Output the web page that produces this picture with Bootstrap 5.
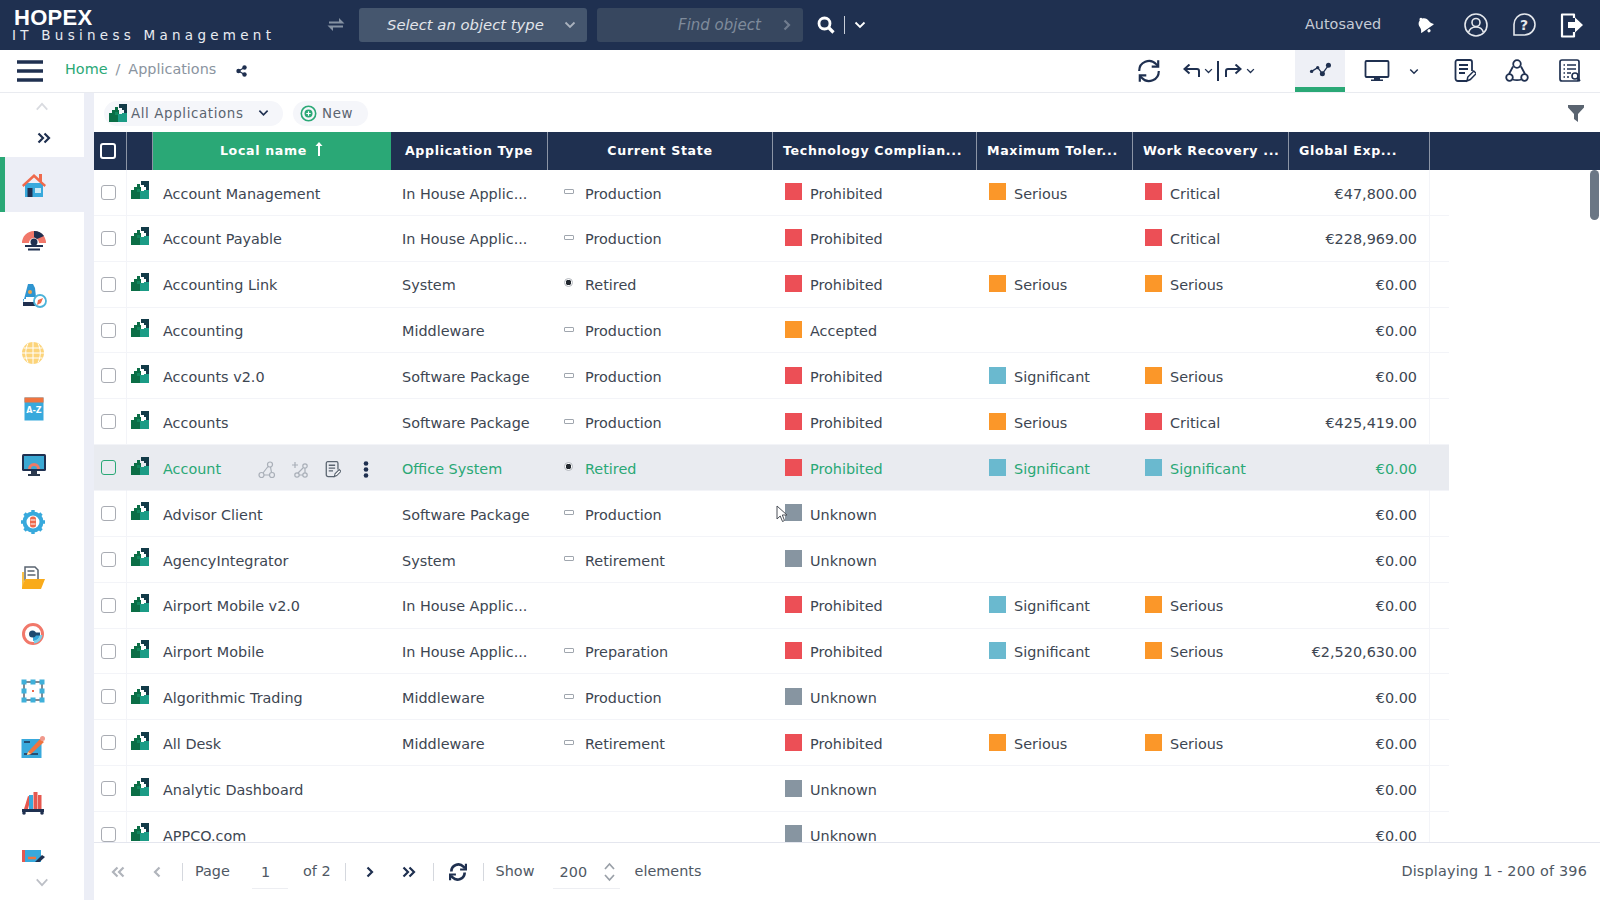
<!DOCTYPE html>
<html lang="en">
<head>
<meta charset="utf-8">
<title>HOPEX IT Business Management</title>
<link href="https://cdn.jsdelivr.net/npm/bootstrap@5.3.0/dist/css/bootstrap.min.css" rel="stylesheet">
<style>
html,body{height:100%;overflow:hidden}
body{font-family:"DejaVu Sans",Verdana,sans-serif;font-size:14px;color:#3d4652;background:#fff;width:1600px;height:900px}
.hx-sprite{width:0;height:0;position:absolute}
.hx-top{height:50px;background:#1f3050;color:#fff;padding:0}
.hx-brand{width:300px;padding:8px 0 0 12px;height:50px;flex:none}
.hx-logo{font:700 22px/20px "Liberation Sans",sans-serif;letter-spacing:.3px;padding-left:2px;color:#fff}
.hx-sub{font-family:"DejaVu Sans",sans-serif;font-size:13.5px;line-height:15px;letter-spacing:4.27px;color:#e8ebf0;margin-top:0;white-space:nowrap}
.hx-swap{width:24px;height:24px;margin-left:24px;color:#8592a3;flex:none}
.hx-select{width:228px;height:34px;background:#45566e;border-radius:3px;margin-left:11px;padding:0 11px 0 28px;font-style:italic;font-size:14.8px;color:#e2e5ea;flex:none}
.hx-find{width:206px;height:34px;background:#37475f;border-radius:3px;margin-left:10px;padding:0 12px 0 81px;font-style:italic;font-size:15px;color:#7f8b9b;flex:none}
.hx-ic{flex:none;display:block}
.hx-sep{width:1px;height:18px;background:#c8ced8;flex:none}
.hx-auto{font-size:14.4px;color:#c6ccd6;width:111px;flex:none}
.hx-crumbbar{height:43px;border-bottom:1px solid #e9ebf0;padding:0}
.hx-burger{width:26px;height:22px;margin-left:17px;flex:none;color:#1f3050}
.hx-crumbs{margin:0 0 2px 22px;font-size:14.4px;--bs-breadcrumb-divider-color:#8a94a0;--bs-breadcrumb-item-padding-x:8px}
.hx-crumbs a{color:#2aa876;text-decoration:none}
.hx-crumbs .breadcrumb-item.active{color:#8a94a0}
.hx-tabon{width:50px;height:43px;background:#eef0f6;border-bottom:0;position:relative;flex:none}
.hx-tabon::after{content:"";position:absolute;left:0;right:0;bottom:1px;height:5px;background:#2aa876}
.hx-main{height:807px}
.hx-side{width:84px;flex:none;background:#fff;overflow:hidden;position:relative}
.hx-strip{width:10px;flex:none;background:#eceef6}
.hx-sidetop{height:64px}
.hx-upchev{height:26px;padding-top:9px}
.hx-dbl{color:#1f3050;font-size:0}
.hx-sitem{height:56.3px;padding-left:21px;flex:none}
.hx-sitem.hx-on{background:#eceef6;border-left:5px solid #2aa876;padding-left:16px;height:55px}
.hx-sideclip{height:705px;overflow:hidden}
.hx-downchev{position:absolute;left:0;right:0;bottom:6px;height:30px;background:#fff;padding-top:14px}
.hx-body{min-width:0}
.hx-tools{height:39px;padding:1px 16px 0 10px}
.hx-pill{height:25px;padding:0 5px;border-radius:13px;background:#f5f6fa;border:0;color:#5a6470;font-size:13.4px;letter-spacing:.62px;line-height:25px;--bs-btn-hover-bg:#f5f6fa;--bs-btn-hover-color:#5a6470}
.hx-pill1{width:179px}
.hx-pill2{width:75px;margin-left:10px;padding-left:7px}
.hx-headband{background:#1f3050;height:38px;overflow:hidden}
.table.hx-tbl{table-layout:fixed;width:1355px;margin:0;border-collapse:separate;border-spacing:0;--bs-table-bg:transparent;color:#3d4652}
.hx-c0{width:33px}.hx-c1{width:26px}.hx-c2{width:238px}.hx-c3{width:157px}.hx-c4{width:225px}.hx-c5{width:204px}.hx-c6{width:156px}.hx-c7{width:156px}.hx-c8{width:141px}.hx-c9{width:19px}
.table.hx-tbl>:not(caption)>*>th{background:#1f3050;color:#fff;height:38px;padding:0 10px;font-size:12.6px;font-weight:700;letter-spacing:.66px;text-align:center;white-space:nowrap;overflow:hidden;border:0;border-right:1px solid #8b94a5;vertical-align:middle;line-height:1}
.table.hx-tbl>:not(caption)>*>th.hx-sorted{background:#2aa876;border-right-color:#2aa876}
.table.hx-tbl>:not(caption)>*>th.hx-left{text-align:left}
.table.hx-tbl>:not(caption)>*>th.hx-end{border-right:0;padding:0}
.hx-check{width:15px;height:15px;margin:0 0 0 7px;border:1px solid #a9acb3;border-radius:3px;display:block;background:#fff}
.hx-checkh{width:16px;height:16px;border:2px solid #fff;background:transparent;border-radius:3px;margin:0 0 0 6px;display:block}
.hx-scroll{height:672px;overflow:hidden;position:relative}
.table.hx-tbl>:not(caption)>*>td{height:45.86px;padding:4px 11px 0;font-size:14.4px;vertical-align:middle;border:0;border-bottom:1px solid #f3f4f8;white-space:nowrap;overflow:hidden;background:#fff;box-shadow:none;color:#3d4652}
.table.hx-tbl>:not(caption)>*>td.hx-t0{padding:0;border-right:1px solid #f3f4f8}
.table.hx-tbl>:not(caption)>*>td.hx-t1{padding:0 0 0 4px}
.hx-t1 svg{display:block;margin-top:-4px}
.table.hx-tbl>:not(caption)>*>td.hx-t2{padding-left:10px}
.table.hx-tbl>:not(caption)>*>td.hx-num{text-align:right;padding-right:12px;border-right:1px solid #f3f4f8}
.table.hx-tbl>:not(caption)>*>td.hx-sw{padding-left:12px}
.table.hx-tbl>:not(caption)>*>td.hx-st{padding-left:13px}
.table.hx-tbl>:not(caption)>tr.hx-hov>td,.table.hx-tbl>tbody>tr.hx-hov>td{background:#e9ebf0;color:#2aa876;border-right-color:#e9ebf0}
.hx-hov .hx-check{border-color:#2aa876;background:transparent}
.hx-swatch{width:17px;height:17px;flex:none;margin-right:8px;margin-top:-5px}
.hx-r{background:#ec4f56}.hx-o{background:#fb9729}.hx-b{background:#6ab9cf}.hx-g{background:#8795a1}
.hx-mark{width:24px;flex:none;margin-top:-5px;padding-left:3px}
.hx-bar{width:10px;height:5px;border:1px solid #a0a6ae;border-radius:1px;display:block}
.hx-rad{width:9px;height:9px;border:1px solid #b2b6bc;border-radius:50%;display:block;background:radial-gradient(circle,#22282f 0 2.6px,#fff 3px);margin-top:-2px}
.hx-acts{gap:0;margin-left:auto;margin-right:-2px}
.hx-rowname{width:100%}
.hx-pad{width:33px;flex:none;text-align:center}
.hx-foot{height:58px;border-top:1px solid #e4e6ee;padding:0 13px 0 0;color:#4f5864;font-size:14.4px;background:#fff}
.hx-f{flex:none}
.hx-fsep{width:1px;height:18px;background:#d5d8de;flex:none}
.hx-inp{width:36px;height:34px;border-bottom:1px solid #edeef2;flex:none;line-height:34px;padding-left:9px}
.hx-inp2{width:67px;margin-left:13px;padding-left:7px}
.hx-disp{letter-spacing:.17px}
.hx-cursor{position:absolute;left:776px;top:505px;width:12px;height:18px;z-index:5}
.hx-scrollbar{position:absolute;left:1590px;top:170px;width:9px;height:50px;background:#6b7785;border-radius:5px;z-index:4}
</style>
</head>
<body>
<svg class="hx-sprite" aria-hidden="true">
<defs>
<symbol id="puz" viewBox="0 0 18 18"><path d="M0 9h3V6h3V3h3v3h1v12H0z" fill="#0b6e46"/><path d="M9 10h4v-1h5v9H9z" fill="#1c9c86"/><path d="M10 0h8v9h-3V6h-2V4h-3z" fill="#123b48"/><path d="M6 8h3v3H6z" fill="#12885e"/></symbol>
<symbol id="chev" viewBox="0 0 12 8"><path d="M1.5 1.5 6 6l4.5-4.5" fill="none" stroke="currentColor" stroke-width="1.8"/></symbol>
<symbol id="chevup" viewBox="0 0 16 10"><path d="M2 8.5 8 2l6 6.5" fill="none" stroke="currentColor" stroke-width="2"/></symbol>
<symbol id="chevdn" viewBox="0 0 16 10"><path d="M2 1.5 8 8l6-6.5" fill="none" stroke="currentColor" stroke-width="2"/></symbol>
<symbol id="dblr" viewBox="0 0 14 12"><path d="M1.5 1.5 6 6l-4.500 4.500M7.500 1.500 12 6l-4.500 4.500" fill="none" stroke="currentColor" stroke-width="2.200"/></symbol>
<symbol id="dbll" viewBox="0 0 14 12"><path d="M6.500 1.500 2 6l4.500 4.500M12.500 1.500 8 6l4.500 4.500" fill="none" stroke="currentColor" stroke-width="2.200"/></symbol>
<symbol id="sgl" viewBox="0 0 8 12"><path d="M1.500 1.500 6 6l-4.500 4.500" fill="none" stroke="currentColor" stroke-width="2.200"/></symbol>
<symbol id="sgll" viewBox="0 0 8 12"><path d="M6.500 1.500 2 6l4.500 4.500" fill="none" stroke="currentColor" stroke-width="2.200"/></symbol>
<symbol id="sync" viewBox="0 0 24 24"><path d="M3 12A9 9 0 0 1 18.500 5.500l2 2M21 12A9 9 0 0 1 5.500 18.500l-2-2" fill="none" stroke="currentColor" stroke-width="2"/><path d="M20.500 2v6h-6M3.500 22v-6h6" fill="none" stroke="currentColor" stroke-width="2"/></symbol>
<symbol id="noteq" viewBox="0 0 22 24"><rect x="1" y="1" width="19" height="21" rx="2" fill="none" stroke="currentColor" stroke-width="1.700"/><path d="M4.500 6h1.500M8 6h9M4.500 10h1.500M8 10h9M4.500 14h1.500M8 14h4M4.500 18h1.500M8 18h2" stroke="currentColor" stroke-width="1.600" fill="none"/><circle cx="16" cy="17" r="3" fill="#fff" stroke="currentColor" stroke-width="1.600"/><path d="m18 19 3 3" stroke="currentColor" stroke-width="2"/></symbol>
<symbol id="notep" viewBox="0 0 22 24"><path d="M13 22H4a2.500 2.500 0 0 1-2.500-2.500V3A2 2 0 0 1 3.500 1H16a2 2 0 0 1 2 2v9" fill="none" stroke="currentColor" stroke-width="1.800"/><path d="M5 6h9M5 10h9M5 14h6" stroke="currentColor" stroke-width="1.800" fill="none"/><path d="m13 22 .8-4 6-6 2.500 2.500-6 6z" fill="#fff" stroke="currentColor" stroke-width="1.500"/></symbol>
<symbol id="tri" viewBox="0 0 24 24"><path d="M8 7.500 4 15M16 7.500l4 7.500M7.500 20.500c3 .8 6 .8 9 0" fill="none" stroke="currentColor" stroke-width="1.800"/><circle cx="12" cy="5" r="3.800" fill="#fff" stroke="currentColor" stroke-width="1.800"/><circle cx="4.500" cy="18.500" r="3.300" fill="#fff" stroke="currentColor" stroke-width="1.800"/><circle cx="19.500" cy="18.500" r="3.300" fill="#fff" stroke="currentColor" stroke-width="1.800"/></symbol>
<symbol id="spark" viewBox="0 0 24 16"><circle cx="2.500" cy="10" r="1.800" fill="currentColor"/><circle cx="9" cy="6" r="1.800" fill="currentColor"/><circle cx="14" cy="12.500" r="2.700" fill="currentColor"/><circle cx="20.500" cy="3.500" r="2.700" fill="currentColor"/><path d="M2.500 10 9 6l5 6.500 6.500-9" stroke="currentColor" stroke-width="1.300" fill="none"/></symbol>
</defs>
</svg>

<nav class="navbar hx-top d-flex flex-nowrap align-items-center justify-content-start">
  <div class="hx-brand">
    <div class="hx-logo">HOPEX</div>
    <div class="hx-sub">IT Business Management</div>
  </div>
  <svg class="hx-swap" viewBox="0 0 24 24"><path d="M5 8.500h10V5l5.500 5.500H5zM19 14.500H9V18l-5.500-5.500H19z" fill="currentColor"/></svg>
  <div class="hx-select d-flex align-items-center justify-content-between"><span>Select an object type</span><svg class="hx-ic" width="12" height="8" style="color:#aab2be"><use href="#chev"/></svg></div>
  <div class="hx-find d-flex align-items-center justify-content-between"><span>Find object</span><svg class="hx-ic" width="8" height="12" style="color:#6f7c8e"><use href="#sgl"/></svg></div>
  <svg class="hx-ic ms-3" width="18" height="18" viewBox="0 0 18 18" style="margin-left:14px!important"><circle cx="7.500" cy="7.500" r="5.500" fill="none" stroke="#fff" stroke-width="2.800"/><path d="m11.500 11.500 5 5" stroke="#fff" stroke-width="3.200"/></svg>
  <span class="hx-sep" style="margin-left:9px"></span>
  <svg class="hx-ic" width="12" height="8" style="margin-left:9px;color:#fff"><use href="#chev"/></svg>
  <div class="hx-auto ms-auto">Autosaved</div>
  <svg class="hx-ic" width="18" height="18" viewBox="0 0 18 18"><g transform="rotate(-35 9 9)"><path d="M9 .5a1.500 1.500 0 0 1 1.500 1.500c3 1 4 3.500 4 6 0 2.500 1 3.800 2 4.800v.7h-15v-.7c1-1 2-2.300 2-4.800 0-2.500 1-5 4-6A1.500 1.500 0 0 1 9 .5z" fill="#fff"/><circle cx="9" cy="16" r="1.600" fill="#fff"/></g></svg>
  <svg class="hx-ic" width="24" height="24" viewBox="0 0 24 24" style="margin-left:30px"><circle cx="12" cy="12" r="11" fill="none" stroke="#e4e7ec" stroke-width="1.600"/><circle cx="12" cy="9.500" r="4" fill="none" stroke="#e4e7ec" stroke-width="1.600"/><path d="M4.500 19.500c1-3.500 4-5.500 7.500-5.500s6.500 2 7.500 5.500" fill="none" stroke="#e4e7ec" stroke-width="1.600"/></svg>
  <svg class="hx-ic" width="24" height="24" viewBox="0 0 24 24" style="margin-left:24px"><path d="M12.500 1a10.500 10.500 0 0 1 0 21H2v-10A10.500 10.500 0 0 1 12.500 1z" fill="none" stroke="#e4e7ec" stroke-width="1.600"/><text x="12" y="17" font-size="14" font-weight="700" fill="#e4e7ec" text-anchor="middle" font-family="DejaVu Sans">?</text></svg>
  <svg class="hx-ic" width="25" height="25" viewBox="0 0 25 25" style="margin-left:24px"><path d="M14 5V1.500H2v22h12V19" fill="none" stroke="#fff" stroke-width="2.200" stroke-linejoin="round"/><path d="M8 9h7V4.500l8 7.500-8 7.500V15H8z" fill="#fff"/></svg>
  <span style="width:15px;flex:none"></span>
</nav>

<div class="hx-crumbbar d-flex align-items-center">
  <svg class="hx-burger" viewBox="0 0 26 22"><path d="M0 2h26M0 11h26M0 20h26" stroke="currentColor" stroke-width="3.600"/></svg>
  <nav aria-label="breadcrumb"><ol class="breadcrumb hx-crumbs"><li class="breadcrumb-item"><a href="#">Home</a></li><li class="breadcrumb-item active">Applications</li></ol></nav>
  <svg class="hx-ic" width="11" height="12" viewBox="0 0 11 12" style="margin-left:20px;color:#1f3050"><circle cx="2.500" cy="6" r="2.200" fill="currentColor"/><circle cx="8.500" cy="2.500" r="2.200" fill="currentColor"/><circle cx="8.500" cy="9.500" r="2.200" fill="currentColor"/><path d="M2.500 6 8.500 2.500M2.500 6l6 3.500" stroke="currentColor" stroke-width="1.300"/></svg>
  <svg class="hx-ic ms-auto" width="26" height="26" style="color:#1f3050"><use href="#sync"/></svg>
  <svg class="hx-ic" width="17" height="14" viewBox="0 0 17 14" style="margin-left:21px;color:#1f3050"><path d="M16 13V7a2 2 0 0 0-2-2H2" fill="none" stroke="currentColor" stroke-width="2"/><path d="M6.500 .5 1.500 5l5 4.500" fill="none" stroke="currentColor" stroke-width="2"/></svg>
  <svg class="hx-ic" width="9" height="6" style="margin-left:4px;color:#1f3050"><use href="#chev"/></svg>
  <span style="width:2px;height:20px;background:#1f3050;margin-left:4px;flex:none"></span>
  <svg class="hx-ic" width="17" height="14" viewBox="0 0 17 14" style="margin-left:6px;color:#1f3050"><path d="M1 13V7a2 2 0 0 1 2-2h12" fill="none" stroke="currentColor" stroke-width="2"/><path d="M10.500 .5 15.500 5l-5 4.500" fill="none" stroke="currentColor" stroke-width="2"/></svg>
  <svg class="hx-ic" width="9" height="6" style="margin-left:4px;color:#1f3050"><use href="#chev"/></svg>
  <div class="hx-tabon d-flex align-items-center justify-content-center" style="margin-left:40px"><svg width="23" height="15" style="color:#1f3050;margin-bottom:4px"><use href="#spark"/></svg></div>
  <svg class="hx-ic" width="26" height="24" viewBox="0 0 26 24" style="margin-left:19px;color:#1f3050"><rect x="1.500" y="2" width="23" height="16" rx="1" fill="none" stroke="currentColor" stroke-width="1.800"/><path d="M10 18h6v2.500h3V22H7v-1.500h3z" fill="currentColor"/></svg>
  <svg class="hx-ic" width="10" height="7" style="margin-left:19px;color:#1f3050"><use href="#chev"/></svg>
  <svg class="hx-ic" width="22" height="24" style="margin-left:35px;color:#1f3050"><use href="#notep"/></svg>
  <svg class="hx-ic" width="24" height="24" style="margin-left:29px;color:#1f3050"><use href="#tri"/></svg>
  <svg class="hx-ic" width="22" height="24" style="margin-left:30px;color:#1f3050"><use href="#noteq"/></svg>
  <span style="width:19px;flex:none"></span>
</div>

<div class="hx-main d-flex">
  <aside class="hx-side d-flex flex-column">
    <div class="hx-sidetop">
      <div class="hx-upchev d-flex justify-content-center"><svg width="14" height="9" style="color:#d9dbe0"><use href="#chevup"/></svg></div>
      <div class="hx-dbl d-flex align-items-center justify-content-center" style="height:38px;padding-left:3px"><svg width="14" height="12"><use href="#dblr"/></svg></div>
    </div>
    <div class="hx-sideclip d-flex flex-column">
      <div class="hx-sitem hx-on d-flex align-items-center"><svg width="26" height="26" viewBox="0 0 26 26"><rect x="4" y="11" width="18" height="14" fill="#38a9dc"/><path d="M1 13 13 2l5 4.500V2h3v7.500l4 3.500-1.500 2L13 5.500 2.500 15z" fill="#ef6a4c"/><rect x="6.500" y="16" width="5" height="9" fill="#1f3050"/><rect x="14" y="16" width="6" height="5" fill="#cbeaf5"/></svg></div>
      <div class="hx-sitem d-flex align-items-center"><svg width="26" height="26" viewBox="0 0 26 26"><path d="M1 16a12 12 0 0 1 24 0h-7a5 5 0 0 0-10 0z" fill="#f1786a"/><path d="M13 4a12 12 0 0 1 10 5l-7 3-3-2z" fill="#1f3050"/><circle cx="13" cy="15" r="3.500" fill="#1f3050"/><path d="M4 19h18M7 22.500h12" stroke="#1f3050" stroke-width="1.800"/></svg></div>
      <div class="hx-sitem d-flex align-items-center"><svg width="26" height="26" viewBox="0 0 26 26"><path d="M7 1h5l2 4 1 9H5v2H2v4h15v2H2v-2" fill="#2f95d0"/><rect x="2" y="19" width="13" height="4" fill="#1f3050"/><circle cx="9" cy="9" r="2" fill="#f1a34a"/><circle cx="19" cy="18" r="6" fill="#fff" stroke="#4db3d9" stroke-width="1.800"/><path d="m22 15-5 2 -1 5 4-2z" fill="#ef6a4c"/></svg></div>
      <div class="hx-sitem d-flex align-items-center"><svg width="24" height="24" viewBox="0 0 24 24"><circle cx="12" cy="12" r="11" fill="#fcd47a"/><path d="M1 12h22M2.500 7h19M2.500 17h19M12 1v22M7 2.500c-3 6-3 13 0 19M17 2.500c3 6 3 13 0 19" stroke="#fff" stroke-width="1" fill="none"/></svg></div>
      <div class="hx-sitem d-flex align-items-center"><svg width="20" height="24" viewBox="0 0 20 24" style="margin-left:3px"><rect x="0.500" y="0.500" width="19" height="23" fill="#38a9dc"/><rect x="0.500" y="0.500" width="19" height="5" fill="#f0743f"/><text x="10" y="16" font-size="8" font-weight="700" fill="#fff" text-anchor="middle" font-family="DejaVu Sans">A-Z</text></svg></div>
      <div class="hx-sitem d-flex align-items-center"><svg width="26" height="24" viewBox="0 0 26 24"><rect x="1" y="1" width="24" height="17" rx="1.500" fill="#1f3050"/><rect x="3" y="3" width="20" height="13" fill="#3ba9d4"/><path d="M7 16a6 6 0 0 1 12 0h-3a3 3 0 0 0-6 0z" fill="#ef7a66"/><path d="M10 18h6v3h3v2H7v-2h3z" fill="#2b3a4f"/></svg></div>
      <div class="hx-sitem d-flex align-items-center"><svg width="24" height="24" viewBox="0 0 24 24"><circle cx="12" cy="12" r="8.500" fill="#fff" stroke="#38a9dc" stroke-width="4"/><path d="M12 0v4M12 20v4M0 12h4M20 12h4M3.500 3.500l3 3M17.500 17.500l3 3M3.500 20.500l3-3M17.500 6.500l3-3" stroke="#38a9dc" stroke-width="3.400"/><rect x="9" y="6.500" width="6" height="11" rx="2.500" fill="#ef6a4c"/><path d="M9.500 10h5M9.500 14h5" stroke="#fff"/></svg></div>
      <div class="hx-sitem d-flex align-items-center"><svg width="24" height="24" viewBox="0 0 24 24"><path d="M1 6h2v16H1z" fill="#f9c147"/><path d="M4 14V1h10l3 3v11z" fill="#fff" stroke="#5a6470" stroke-width="1.500"/><path d="M6.500 5h7M6.500 9h8" stroke="#5a6470" stroke-width="1.500"/><path d="M1 22l3-9h20l-4 10H1z" fill="#f9ab1b"/></svg></div>
      <div class="hx-sitem d-flex align-items-center"><svg width="24" height="24" viewBox="0 0 24 24"><circle cx="12" cy="12" r="9.500" fill="none" stroke="#f1786a" stroke-width="3"/><path d="M13 21.500a9.500 9.500 0 0 0 8.500-8.500H13z" fill="#7ed0ea"/><circle cx="12" cy="12" r="7" fill="#fff"/><path d="M12 19a7 7 0 0 0 7-7h-7z" fill="#38a9dc"/><circle cx="11.500" cy="12" r="3.500" fill="#1f4a70"/><path d="M12 10.500h7v3h-7z" fill="#1f4a70"/></svg></div>
      <div class="hx-sitem d-flex align-items-center"><svg width="24" height="24" viewBox="0 0 24 24"><rect x="3" y="3" width="18" height="18" fill="none" stroke="#5a6470" stroke-width="1.500"/><g fill="#3fb0da"><rect x="0.500" y="0.500" width="5" height="5"/><rect x="18.500" y="0.500" width="5" height="5"/><rect x="0.500" y="18.500" width="5" height="5"/><rect x="18.500" y="18.500" width="5" height="5"/><rect x="0.500" y="9.500" width="5" height="5"/><rect x="18.500" y="9.500" width="5" height="5"/><rect x="9.500" y="0.500" width="5" height="5"/><rect x="9.500" y="18.500" width="5" height="5"/></g><rect x="11" y="11" width="2" height="2" fill="#ef6a4c"/></svg></div>
      <div class="hx-sitem d-flex align-items-center"><svg width="24" height="24" viewBox="0 0 24 24"><rect x="0.500" y="4" width="20" height="19" fill="#38a9dc"/><path d="M3 7h6M3 19h14" stroke="#1f3050" stroke-width="1.300"/><path d="m7 17 12-13 4 3L10 19l-4 1z" fill="#f0743f"/><path d="m7 17 3 2-4 1z" fill="#fde0a8"/><circle cx="21.500" cy="3.500" r="2.500" fill="#f1998c"/></svg></div>
      <div class="hx-sitem d-flex align-items-center"><svg width="24" height="24" viewBox="0 0 24 24"><rect x="1" y="18" width="22" height="3" fill="#1f3050"/><circle cx="3" cy="22" r="1.800" fill="#1f3050"/><circle cx="21" cy="22" r="1.800" fill="#1f3050"/><path d="M3 18 7 5l3 1-3 12z" fill="#e6584f"/><rect x="8" y="4" width="4" height="14" fill="#38a9dc"/><rect x="12.500" y="1" width="4" height="17" fill="#e6584f"/><rect x="17" y="4" width="3.500" height="14" fill="#e6584f"/></svg></div>
      <div class="hx-sitem d-flex align-items-center"><svg width="24" height="24" viewBox="0 0 24 24"><rect x="1" y="3" width="19" height="16" fill="#38a9dc"/><rect x="1" y="3" width="3" height="16" fill="#e6584f"/><path d="M7 11h8" stroke="#f0743f" stroke-width="2.500"/><path d="m10 19 11-11 3 2-12 11z" fill="#1f3050"/></svg></div>
    </div>
    <div class="hx-downchev d-flex justify-content-center"><svg width="14" height="9" style="color:#bcbfc6"><use href="#chevdn"/></svg></div>
  </aside>
  <div class="hx-strip"></div>

  <div class="hx-body flex-grow-1 d-flex flex-column">
    <div class="hx-tools d-flex align-items-center">
      <button type="button" class="btn hx-pill hx-pill1 d-flex align-items-center"><svg width="18" height="18" class="me-1 flex-none"><use href="#puz"/></svg><span class="flex-grow-1 text-start">All Applications</span><svg width="11" height="8" style="color:#1f3050;margin-right:9px"><use href="#chev"/></svg></button>
      <button type="button" class="btn hx-pill hx-pill2 d-flex align-items-center"><svg width="17" height="17" viewBox="0 0 17 17" style="margin-right:5px"><circle cx="8.500" cy="8.500" r="7.200" fill="none" stroke="#2aa876" stroke-width="1.600"/><circle cx="8.500" cy="8.500" r="4" fill="#2aa876"/><path d="M6.300 8.500h4.400M8.500 6.300v4.400" stroke="#fff" stroke-width="1.200"/></svg>New</button>
      <svg class="ms-auto" width="16" height="17" viewBox="0 0 16 17"><path d="M0 0h16v2.500L10 9v8l-4-3V9L0 2.500z" fill="#5a6470"/></svg>
    </div>
    <div class="hx-headband">
      <table class="table hx-tbl">
        <colgroup><col class="hx-c0"><col class="hx-c1"><col class="hx-c2"><col class="hx-c3"><col class="hx-c4"><col class="hx-c5"><col class="hx-c6"><col class="hx-c7"><col class="hx-c8"><col class="hx-c9"></colgroup>
        <thead><tr>
          <th style="padding:0"><span class="hx-checkh" role="checkbox" aria-label="Select all"></span></th>
          <th></th>
          <th class="hx-sorted">Local name <svg width="8" height="15" viewBox="0 0 8 15" style="margin-left:3px;margin-top:-5px"><path d="M4 1 7.500 5H5v10H3V5H.5z" fill="#fff"/></svg></th>
          <th>Application Type</th>
          <th>Current State</th>
          <th class="hx-left">Technology Complian...</th>
          <th class="hx-left">Maximum Toler...</th>
          <th class="hx-left">Work Recovery ...</th>
          <th class="hx-left">Global Exp...</th>
          <th class="hx-end"></th>
        </tr></thead>
      </table>
    </div>
    <div class="hx-scroll">
      <table class="table hx-tbl">
        <colgroup><col class="hx-c0"><col class="hx-c1"><col class="hx-c2"><col class="hx-c3"><col class="hx-c4"><col class="hx-c5"><col class="hx-c6"><col class="hx-c7"><col class="hx-c8"><col class="hx-c9"></colgroup>
        <tbody>
<tr><td class="hx-t0"><span class="hx-check"></span></td><td class="hx-t1"><svg width="18" height="18"><use href="#puz"/></svg></td><td class="hx-t2">Account Management</td><td>In House Applic...</td><td class="hx-st"><div class="d-flex align-items-center"><span class="hx-mark"><i class="hx-bar"></i></span>Production</div></td><td class="hx-sw"><div class="d-flex align-items-center"><span class="hx-swatch hx-r"></span>Prohibited</div></td><td class="hx-sw"><div class="d-flex align-items-center"><span class="hx-swatch hx-o"></span>Serious</div></td><td class="hx-sw"><div class="d-flex align-items-center"><span class="hx-swatch hx-r"></span>Critical</div></td><td class="hx-num">€47,800.00</td><td></td></tr>
<tr><td class="hx-t0"><span class="hx-check"></span></td><td class="hx-t1"><svg width="18" height="18"><use href="#puz"/></svg></td><td class="hx-t2">Account Payable</td><td>In House Applic...</td><td class="hx-st"><div class="d-flex align-items-center"><span class="hx-mark"><i class="hx-bar"></i></span>Production</div></td><td class="hx-sw"><div class="d-flex align-items-center"><span class="hx-swatch hx-r"></span>Prohibited</div></td><td class="hx-sw"></td><td class="hx-sw"><div class="d-flex align-items-center"><span class="hx-swatch hx-r"></span>Critical</div></td><td class="hx-num">€228,969.00</td><td></td></tr>
<tr><td class="hx-t0"><span class="hx-check"></span></td><td class="hx-t1"><svg width="18" height="18"><use href="#puz"/></svg></td><td class="hx-t2">Accounting Link</td><td>System</td><td class="hx-st"><div class="d-flex align-items-center"><span class="hx-mark"><i class="hx-rad"></i></span>Retired</div></td><td class="hx-sw"><div class="d-flex align-items-center"><span class="hx-swatch hx-r"></span>Prohibited</div></td><td class="hx-sw"><div class="d-flex align-items-center"><span class="hx-swatch hx-o"></span>Serious</div></td><td class="hx-sw"><div class="d-flex align-items-center"><span class="hx-swatch hx-o"></span>Serious</div></td><td class="hx-num">€0.00</td><td></td></tr>
<tr><td class="hx-t0"><span class="hx-check"></span></td><td class="hx-t1"><svg width="18" height="18"><use href="#puz"/></svg></td><td class="hx-t2">Accounting</td><td>Middleware</td><td class="hx-st"><div class="d-flex align-items-center"><span class="hx-mark"><i class="hx-bar"></i></span>Production</div></td><td class="hx-sw"><div class="d-flex align-items-center"><span class="hx-swatch hx-o"></span>Accepted</div></td><td class="hx-sw"></td><td class="hx-sw"></td><td class="hx-num">€0.00</td><td></td></tr>
<tr><td class="hx-t0"><span class="hx-check"></span></td><td class="hx-t1"><svg width="18" height="18"><use href="#puz"/></svg></td><td class="hx-t2">Accounts v2.0</td><td>Software Package</td><td class="hx-st"><div class="d-flex align-items-center"><span class="hx-mark"><i class="hx-bar"></i></span>Production</div></td><td class="hx-sw"><div class="d-flex align-items-center"><span class="hx-swatch hx-r"></span>Prohibited</div></td><td class="hx-sw"><div class="d-flex align-items-center"><span class="hx-swatch hx-b"></span>Significant</div></td><td class="hx-sw"><div class="d-flex align-items-center"><span class="hx-swatch hx-o"></span>Serious</div></td><td class="hx-num">€0.00</td><td></td></tr>
<tr><td class="hx-t0"><span class="hx-check"></span></td><td class="hx-t1"><svg width="18" height="18"><use href="#puz"/></svg></td><td class="hx-t2">Accounts</td><td>Software Package</td><td class="hx-st"><div class="d-flex align-items-center"><span class="hx-mark"><i class="hx-bar"></i></span>Production</div></td><td class="hx-sw"><div class="d-flex align-items-center"><span class="hx-swatch hx-r"></span>Prohibited</div></td><td class="hx-sw"><div class="d-flex align-items-center"><span class="hx-swatch hx-o"></span>Serious</div></td><td class="hx-sw"><div class="d-flex align-items-center"><span class="hx-swatch hx-r"></span>Critical</div></td><td class="hx-num">€425,419.00</td><td></td></tr>
<tr class="hx-hov"><td class="hx-t0"><span class="hx-check"></span></td><td class="hx-t1"><svg width="18" height="18"><use href="#puz"/></svg></td><td class="hx-t2"><div class="d-flex align-items-center hx-rowname"><span>Account</span><span class="hx-acts d-flex align-items-center">
<span class="hx-pad"><svg width="18" height="18" viewBox="0 0 18 18" style="color:#a9afb8"><circle cx="3.500" cy="14" r="2.500" fill="none" stroke="currentColor" stroke-width="1.200"/><circle cx="14" cy="14" r="2.500" fill="none" stroke="currentColor" stroke-width="1.200"/><circle cx="12" cy="3.500" r="2.500" fill="none" stroke="currentColor" stroke-width="1.200"/><path d="M6 14h5.500M5 12l5-6.500M12.500 6l1 5.500" stroke="currentColor" stroke-width="1.200" fill="none"/></svg></span>
<span class="hx-pad"><svg width="18" height="18" viewBox="0 0 18 18" style="color:#a9afb8"><circle cx="6" cy="14" r="2.200" fill="none" stroke="currentColor" stroke-width="1.200"/><circle cx="14" cy="14" r="2.200" fill="none" stroke="currentColor" stroke-width="1.200"/><circle cx="14" cy="5" r="2.200" fill="none" stroke="currentColor" stroke-width="1.200"/><path d="M8.200 14h3.600M7 12l5-5M14 7.200v4.600M1 4h6M4 1v6" stroke="currentColor" stroke-width="1.200" fill="none"/></svg></span>
<span class="hx-pad"><svg width="16" height="17" style="color:#5a6470"><use href="#notep"/></svg></span>
<span class="hx-pad"><svg width="6" height="17" viewBox="0 0 6 17" style="color:#1f3050"><circle cx="3" cy="2.500" r="2.300" fill="currentColor"/><circle cx="3" cy="8.500" r="2.300" fill="currentColor"/><circle cx="3" cy="14.500" r="2.300" fill="currentColor"/></svg></span></span></div></td><td>Office System</td><td class="hx-st"><div class="d-flex align-items-center"><span class="hx-mark"><i class="hx-rad"></i></span>Retired</div></td><td class="hx-sw"><div class="d-flex align-items-center"><span class="hx-swatch hx-r"></span>Prohibited</div></td><td class="hx-sw"><div class="d-flex align-items-center"><span class="hx-swatch hx-b"></span>Significant</div></td><td class="hx-sw"><div class="d-flex align-items-center"><span class="hx-swatch hx-b"></span>Significant</div></td><td class="hx-num">€0.00</td><td></td></tr>
<tr><td class="hx-t0"><span class="hx-check"></span></td><td class="hx-t1"><svg width="18" height="18"><use href="#puz"/></svg></td><td class="hx-t2">Advisor Client</td><td>Software Package</td><td class="hx-st"><div class="d-flex align-items-center"><span class="hx-mark"><i class="hx-bar"></i></span>Production</div></td><td class="hx-sw"><div class="d-flex align-items-center"><span class="hx-swatch hx-g"></span>Unknown</div></td><td class="hx-sw"></td><td class="hx-sw"></td><td class="hx-num">€0.00</td><td></td></tr>
<tr><td class="hx-t0"><span class="hx-check"></span></td><td class="hx-t1"><svg width="18" height="18"><use href="#puz"/></svg></td><td class="hx-t2">AgencyIntegrator</td><td>System</td><td class="hx-st"><div class="d-flex align-items-center"><span class="hx-mark"><i class="hx-bar"></i></span>Retirement</div></td><td class="hx-sw"><div class="d-flex align-items-center"><span class="hx-swatch hx-g"></span>Unknown</div></td><td class="hx-sw"></td><td class="hx-sw"></td><td class="hx-num">€0.00</td><td></td></tr>
<tr><td class="hx-t0"><span class="hx-check"></span></td><td class="hx-t1"><svg width="18" height="18"><use href="#puz"/></svg></td><td class="hx-t2">Airport Mobile v2.0</td><td>In House Applic...</td><td class="hx-st"></td><td class="hx-sw"><div class="d-flex align-items-center"><span class="hx-swatch hx-r"></span>Prohibited</div></td><td class="hx-sw"><div class="d-flex align-items-center"><span class="hx-swatch hx-b"></span>Significant</div></td><td class="hx-sw"><div class="d-flex align-items-center"><span class="hx-swatch hx-o"></span>Serious</div></td><td class="hx-num">€0.00</td><td></td></tr>
<tr><td class="hx-t0"><span class="hx-check"></span></td><td class="hx-t1"><svg width="18" height="18"><use href="#puz"/></svg></td><td class="hx-t2">Airport Mobile</td><td>In House Applic...</td><td class="hx-st"><div class="d-flex align-items-center"><span class="hx-mark"><i class="hx-bar"></i></span>Preparation</div></td><td class="hx-sw"><div class="d-flex align-items-center"><span class="hx-swatch hx-r"></span>Prohibited</div></td><td class="hx-sw"><div class="d-flex align-items-center"><span class="hx-swatch hx-b"></span>Significant</div></td><td class="hx-sw"><div class="d-flex align-items-center"><span class="hx-swatch hx-o"></span>Serious</div></td><td class="hx-num">€2,520,630.00</td><td></td></tr>
<tr><td class="hx-t0"><span class="hx-check"></span></td><td class="hx-t1"><svg width="18" height="18"><use href="#puz"/></svg></td><td class="hx-t2">Algorithmic Trading</td><td>Middleware</td><td class="hx-st"><div class="d-flex align-items-center"><span class="hx-mark"><i class="hx-bar"></i></span>Production</div></td><td class="hx-sw"><div class="d-flex align-items-center"><span class="hx-swatch hx-g"></span>Unknown</div></td><td class="hx-sw"></td><td class="hx-sw"></td><td class="hx-num">€0.00</td><td></td></tr>
<tr><td class="hx-t0"><span class="hx-check"></span></td><td class="hx-t1"><svg width="18" height="18"><use href="#puz"/></svg></td><td class="hx-t2">All Desk</td><td>Middleware</td><td class="hx-st"><div class="d-flex align-items-center"><span class="hx-mark"><i class="hx-bar"></i></span>Retirement</div></td><td class="hx-sw"><div class="d-flex align-items-center"><span class="hx-swatch hx-r"></span>Prohibited</div></td><td class="hx-sw"><div class="d-flex align-items-center"><span class="hx-swatch hx-o"></span>Serious</div></td><td class="hx-sw"><div class="d-flex align-items-center"><span class="hx-swatch hx-o"></span>Serious</div></td><td class="hx-num">€0.00</td><td></td></tr>
<tr><td class="hx-t0"><span class="hx-check"></span></td><td class="hx-t1"><svg width="18" height="18"><use href="#puz"/></svg></td><td class="hx-t2">Analytic Dashboard</td><td></td><td class="hx-st"></td><td class="hx-sw"><div class="d-flex align-items-center"><span class="hx-swatch hx-g"></span>Unknown</div></td><td class="hx-sw"></td><td class="hx-sw"></td><td class="hx-num">€0.00</td><td></td></tr>
<tr><td class="hx-t0"><span class="hx-check"></span></td><td class="hx-t1"><svg width="18" height="18"><use href="#puz"/></svg></td><td class="hx-t2">APPCO.com</td><td></td><td class="hx-st"></td><td class="hx-sw"><div class="d-flex align-items-center"><span class="hx-swatch hx-g"></span>Unknown</div></td><td class="hx-sw"></td><td class="hx-sw"></td><td class="hx-num">€0.00</td><td></td></tr>
        </tbody>
      </table>
    </div>
    <div class="hx-foot d-flex align-items-center">
      <svg class="hx-f" width="14" height="12" style="margin-left:17px;color:#b0b4bb"><use href="#dbll"/></svg>
      <svg class="hx-f" width="8" height="12" style="margin-left:28px;color:#b0b4bb"><use href="#sgll"/></svg>
      <span class="hx-fsep" style="margin-left:21px"></span>
      <span class="hx-f" style="margin-left:12px;width:57px">Page</span>
      <span class="hx-inp">1</span>
      <span class="hx-f" style="margin-left:15px">of 2</span>
      <span class="hx-fsep" style="margin-left:14px"></span>
      <svg class="hx-f" width="8" height="12" style="margin-left:20px;color:#1f3050"><use href="#sgl"/></svg>
      <svg class="hx-f" width="14" height="12" style="margin-left:28px;color:#1f3050"><use href="#dblr"/></svg>
      <span class="hx-fsep" style="margin-left:17px"></span>
      <svg class="hx-f" width="20" height="20" viewBox="0 0 24 24" style="margin-left:14px;color:#1f3050"><path d="M4 11.500A8.500 8.500 0 0 1 18.500 5.500l2 2M20 12.500A8.500 8.500 0 0 1 5.500 18.500l-2-2" fill="none" stroke="currentColor" stroke-width="3.200"/><path d="M21.500 2v7h-7M2.500 22v-7h7" fill="none" stroke="currentColor" stroke-width="2.600"/></svg>
      <span class="hx-fsep" style="margin-left:15px"></span>
      <span class="hx-f" style="margin-left:12px;width:44px">Show</span>
      <span class="hx-inp hx-inp2">200</span>
      <svg class="hx-f" width="13" height="22" viewBox="0 0 13 22" style="margin-left:-17px;color:#9aa0a8"><path d="M2 8l4.500-5L11 8M2 14l4.500 5 4.500-5" fill="none" stroke="currentColor" stroke-width="1.700"/></svg>
      <span class="hx-f" style="margin-left:19px">elements</span>
      <span class="ms-auto hx-disp">Displaying 1 - 200 of 396</span>
    </div>
  </div>
</div>
<svg class="hx-cursor" viewBox="0 0 12 18"><path d="M1 1v13l3.200-3 2.300 5.500 2-1L6.300 10H11z" fill="#fff" stroke="#4a4f57" stroke-width="1"/></svg>
<div class="hx-scrollbar"></div>
<script src="https://cdn.jsdelivr.net/npm/bootstrap@5.3.0/dist/js/bootstrap.bundle.min.js"></script>
</body>
</html>
